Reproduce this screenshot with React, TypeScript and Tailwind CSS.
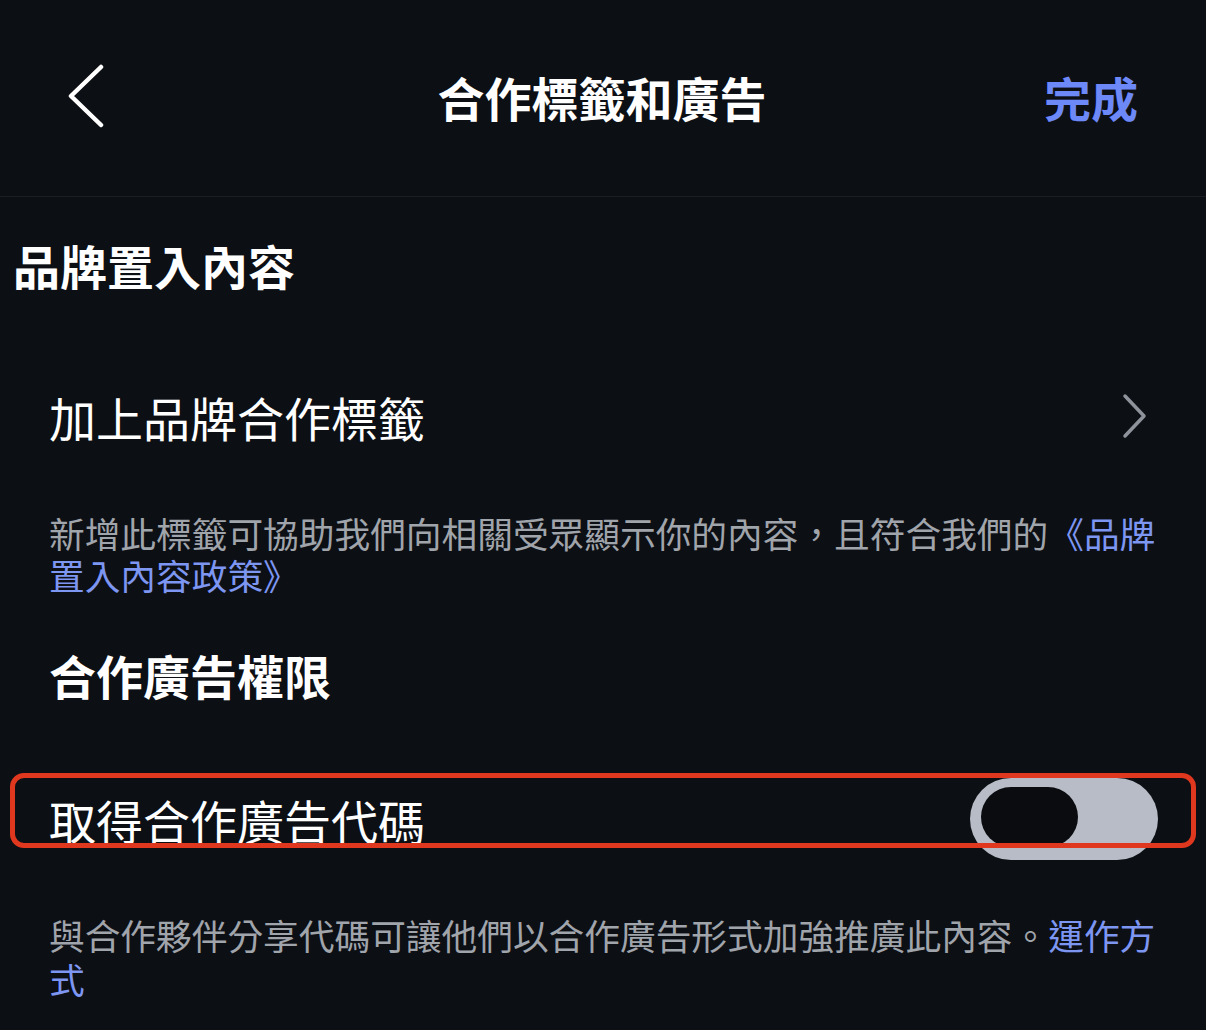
import { useState } from "react";

const FONT = { fontFamily: '"Noto Sans CJK TC", "Noto Sans", sans-serif' };

function BackIcon() {
  return (
    <svg width="40" height="64" viewBox="0 0 40 64" fill="none">
      <polyline
        points="35,3 5,32 35,61"
        stroke="#ffffff"
        strokeWidth="4.5"
        strokeLinecap="round"
        strokeLinejoin="round"
      />
    </svg>
  );
}

function ChevronRight() {
  return (
    <svg width="26" height="46" viewBox="0 0 26 46" fill="none">
      <polyline
        points="3,3 22,23 3,43"
        stroke="#8e939b"
        strokeWidth="3.5"
        strokeLinecap="round"
        strokeLinejoin="round"
      />
    </svg>
  );
}

function Toggle({ on, onChange }: { on: boolean; onChange: (v: boolean) => void }) {
  return (
    <button
      onClick={() => onChange(!on)}
      aria-pressed={on}
      className="flex h-[82px] w-[188px] shrink-0 rounded-full bg-[#b7bcc6] px-[11px] pt-[9px]"
    >
      <span className="block h-[60px] w-[97px] rounded-full bg-[#0a0c10]" />
    </button>
  );
}

export default function App() {
  const [codeOn, setCodeOn] = useState(false);

  return (
    <div className="min-h-[1030px] w-full overflow-hidden bg-[#0c0f14] text-white" style={FONT}>
      {/* Top bar */}
      <header className="flex h-[197px] items-center justify-between border-b border-[#1b1e24] pb-[4px] pl-[66px] pr-[68px]">
        <button aria-label="返回" className="flex w-[120px] items-center">
          <BackIcon />
        </button>
        <h1 className="text-[47px] font-bold leading-none">合作標籤和廣告</h1>
        <div className="flex w-[120px] justify-end">
          <button className="text-[47px] font-bold leading-none text-[#6d88f7]">完成</button>
        </div>
      </header>

      {/* Branded content */}
      <div className="flex h-[142px] items-center pb-[8px] pl-[13px]">
        <h2 className="text-[47px] font-bold leading-none">品牌置入內容</h2>
      </div>

      <button className="flex h-[156px] w-full items-center justify-between pb-[2px] pl-[49px] pr-[58px]">
        <span className="text-[47px] leading-none">加上品牌合作標籤</span>
        <ChevronRight />
      </button>

      <p className="mt-[17px] pl-[49px] pr-[44px] text-[35.7px] leading-[42px] text-[#a0a4ab]">
        新增此標籤可協助我們向相關受眾顯示你的內容，且符合我們的
        <span className="text-[#7d96f2]">《品牌置入內容政策》</span>
      </p>

      {/* Partnership ads */}
      <div className="flex h-[164px] items-center pb-[8px] pl-[49px]">
        <h2 className="text-[47px] font-bold leading-none">合作廣告權限</h2>
      </div>

      <div className="relative flex h-[120px] items-center justify-between pb-[2px] pl-[49px] pr-[48px]">
        <span className="text-[47px] leading-none">取得合作廣告代碼</span>
        <Toggle on={codeOn} onChange={setCodeOn} />
        <div className="pointer-events-none absolute left-[10px] top-[13px] h-[75px] w-[1186px] rounded-[14px] border-[5px] border-[#e0381f]" />
      </div>

      <p className="mt-[33px] pl-[49px] pr-[44px] text-[35.7px] leading-[44px] text-[#a0a4ab]">
        與合作夥伴分享代碼可讓他們以合作廣告形式加強推廣此內容。
        <span className="text-[#7d96f2]">運作方式</span>
      </p>
    </div>
  );
}
